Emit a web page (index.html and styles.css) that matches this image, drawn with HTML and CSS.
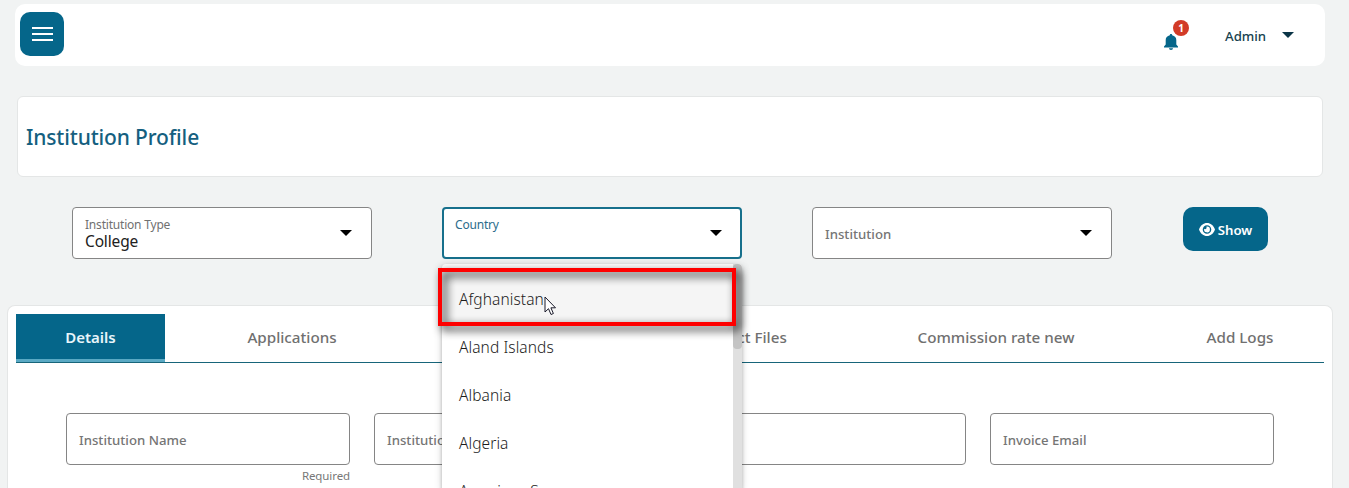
FILE: index.html
```html
<!DOCTYPE html>
<html lang="en">
<head>
<meta charset="utf-8">
<title>Institution Profile</title>
<link rel="stylesheet" href="styles.css">
</head>
<body>
<header class="topbar">
  <button class="menu-btn" aria-label="Menu">
    <svg width="22" height="14" viewBox="0 0 22 14"><path d="M1 1h21M1 7h21M1 13h21" stroke="#fff" stroke-width="2"/></svg>
  </button>
  <div class="account">
    <div class="bell">
      <svg width="14" height="16" viewBox="0 0 14 16"><path fill="#05668a" d="M7 0c.8 0 1.200.5 1.200 1.300C10.800 1.900 12.300 3.700 12.300 6v4.500l1.700 2V13.500H0V12.500l1.700-2V6c0-2.300 1.500-4.100 4.100-4.700C5.800.5 6.200 0 7 0zM5 14.300h4c0 1-.9 1.700-2 1.700s-2-.7-2-1.700z"/></svg>
      <span class="badge">1</span>
    </div>
    <span class="user">Admin</span>
    <svg class="caret-user" width="12" height="6" viewBox="0 0 12 6"><path fill="#0b3547" d="M0 0h12L6 6z"/></svg>
  </div>
</header>

<section class="title-card"><h1 class="title">Institution Profile</h1></section>

<section class="filters">
  <div class="select">
    <div class="select-text"><span class="float-label">Institution Type</span><span class="value">College</span></div>
    <svg width="12" height="6" viewBox="0 0 12 6"><path d="M0 0h12L6 6z"/></svg>
  </div>
  <div class="select select-open">
    <div class="select-text"><span class="float-label">Country</span></div>
    <svg width="12" height="6" viewBox="0 0 12 6"><path d="M0 0h12L6 6z"/></svg>
    <div class="menu">
      <ul class="options">
        <li class="option option-active">Afghanistan</li>
        <li class="option">Aland Islands</li>
        <li class="option">Albania</li>
        <li class="option">Algeria</li>
        <li class="option">American Samoa</li>
      </ul>
      <div class="scrollbar"><div class="thumb"></div></div>
    </div>
    <div class="highlight"></div>
    <svg class="cursor" width="13" height="20" viewBox="0 0 13 20"><path d="M1 1v15l3.500-3.300 2.500 5.800 2.400-1-2.500-5.700h4.600z" fill="#fff" stroke="#1b1b2b" stroke-width="1"/></svg>
  </div>
  <div class="select">
    <span class="label">Institution</span>
    <svg width="12" height="6" viewBox="0 0 12 6"><path d="M0 0h12L6 6z"/></svg>
  </div>
  <button class="show-btn">
    <svg width="16" height="13" viewBox="0 0 16 13"><path fill="#fff" fill-rule="evenodd" d="M8 0C4.500 0 1.500 2.300 0 6.500 1.500 10.700 4.500 13 8 13s6.500-2.300 8-6.500C14.500 2.300 11.500 0 8 0zm0 2.200a4.300 4.300 0 1 1 0 8.600 4.300 4.300 0 0 1 0-8.600z"/><path fill="#fff" d="M8 3.600A2.900 2.900 0 1 1 5.200 5.800a1.500 1.500 0 0 0 2.100-2.100z"/></svg>
    <span>Show</span>
  </button>
</section>

<main class="panel">
  <nav class="tabs">
    <a class="tab tab-active">Details</a>
    <a class="tab tab-apps">Applications</a>
    <a class="tab tab-files">Contract Files</a>
    <a class="tab tab-rate">Commission rate new</a>
    <a class="tab tab-logs">Add Logs</a>
  </nav>
  <div class="fields">
    <div class="field"><div class="box">Institution Name</div><div class="hint">Required</div></div>
    <div class="field"><div class="box">Institution</div></div>
    <div class="field"><div class="box"></div></div>
    <div class="field"><div class="box">Invoice Email</div></div>
  </div>
</main>
</body>
</html>
```
FILE: styles.css
```css
* { box-sizing: border-box; }
body {
  margin: 0;
  height: 488px;
  overflow: hidden;
  background: #f1f3f3;
  font-family: "Noto Sans", "Open Sans", sans-serif;
  color: #212121;
}
button { border: 0; padding: 0; font-family: inherit; background: #05668a; border-radius: 10px; }
.topbar {
  display: flex;
  justify-content: space-between;
  align-items: center;
  margin: 4px 24px 0 15px;
  height: 62px;
  padding: 0 31px 2px 5px;
  background: #fff;
  border-radius: 10px;
}
.menu-btn { display: flex; align-items: center; justify-content: center; width: 44px; height: 44px; }
.account { display: flex; align-items: center; }
.bell { position: relative; display: flex; margin: 15px 47px 0 0; }
.badge {
  position: absolute;
  left: 9px;
  top: -14px;
  width: 16px;
  height: 16px;
  border-radius: 50%;
  background: #d23b27;
  color: #fff;
  font-size: 10px;
  font-weight: 700;
  line-height: 16px;
  text-align: center;
}
.user { width: 42px; margin: 4px 15px 0 0; font-size: 13.2px; font-weight: 500; line-height: 20px; color: #17424f; white-space: nowrap; }
.caret-user { margin-top: 2px; }
.title-card {
  display: flex;
  align-items: center;
  height: 81px;
  margin: 30px 26px 0 17px;
  padding: 0 8px;
  background: #fff;
  border: 1px solid #e4e6e6;
  border-radius: 6px;
}
.title { margin: 0; font-size: 21px; font-weight: 500; color: #155f80; letter-spacing: -.15px; }
.filters { display: flex; align-items: flex-start; margin: 30px 0 0 72px; }
.select {
  position: relative;
  display: flex;
  align-items: center;
  justify-content: space-between;
  width: 300px;
  height: 52px;
  margin-right: 70px;
  padding: 0 19px 0 12px;
  background: #fff;
  border: 1px solid #858585;
  border-radius: 4px;
}
.select-open { border: 2px solid #17708c; padding: 0 18px 0 11px; }
.select-text { display: flex; flex-direction: column; height: 32px; }
.float-label { font-size: 12px; line-height: 16px; color: #707070; letter-spacing: -.2px; }
.select-open .float-label { color: #2b6c8b; }
.value { font-size: 15.5px; line-height: 16px; letter-spacing: -.15px; }
.label { font-size: 13.200px; font-weight: 500; margin: 1px 0 0; color: #757575; }
.show-btn {
  display: flex;
  align-items: center;
  justify-content: center;
  gap: 3px;
  width: 85px;
  height: 44px;
  margin-left: 1px;
  color: #fff;
  font-size: 13.2px;
  font-weight: 600;
  line-height: 20px;
}
.show-btn span { margin-top: 2px; }
.menu {
  position: absolute;
  z-index: 2;
  left: -2px;
  top: 55px;
  display: flex;
  width: 300px;
  height: 226px;
  overflow: hidden;
  background: #fff;
  border-radius: 4px 4px 0 0;
  box-shadow: 0 2px 4px -1px rgba(0,0,0,.2), 0 4px 5px rgba(0,0,0,.14), 0 1px 10px rgba(0,0,0,.12);
}
.options { flex: 1; margin: 0; padding: 10px 0 0; list-style: none; }
.option { height: 48px; padding-left: 17px; font-size: 15.5px; font-weight: 350; line-height: 50px; letter-spacing: .08px; color: #1c1c1c; }
.option-active { margin-top: -6px; padding-top: 6px; height: 54px; background: #f5f5f5; }
.scrollbar { width: 9px; background: #e0e0e0; }
.thumb { height: 85px; background: #c4c4c4; border-radius: 4px; }
.highlight {
  position: absolute;
  z-index: 3;
  left: -6px;
  top: 59px;
  width: 298px;
  height: 58px;
  border: 4px solid #fe0000;
  filter: drop-shadow(4px 4px 5px rgba(0,0,0,.95));
}
.cursor { position: absolute; z-index: 4; left: 100px; top: 87px; }
.panel {
  height: 183px;
  margin: 46px 16px 0 7px;
  padding: 8px 8px 0;
  background: #fff;
  border: 1px solid #e4e6e6;
  border-bottom: 0;
  border-radius: 8px 8px 0 0;
}
.tabs { display: flex; height: 49px; border-bottom: 1px solid #17657a; }
.tab { text-align: center; font-size: 15.2px; line-height: 47px; font-weight: 500; color: #707070; white-space: nowrap; }
.tab-active { width: 149px; background: #05668a; border-bottom: 3px solid #5aa9c4; color: #e8f5fa; font-size: 15px; font-weight: 600; }
.tab-apps { width: 190px; margin-left: 32px; }
.tab-files { width: 205px; margin-left: 248px; }
.tab-rate { width: 256px; margin-left: 28px; }
.tab-logs { width: 168px; margin-left: 32px; }
.fields { display: flex; gap: 24px; margin: 50px 50px 0; }
.field { flex: 1; }
.box { height: 52px; padding: 1px 12px 0; border: 1px solid #858585; border-radius: 4px; font-size: 13.2px; font-weight: 500; line-height: 50px; color: #757575; }
.hint { margin-top: 1px; text-align: right; font-size: 11.500px; line-height: 20px; letter-spacing: -.1px; color: #777; }
```
